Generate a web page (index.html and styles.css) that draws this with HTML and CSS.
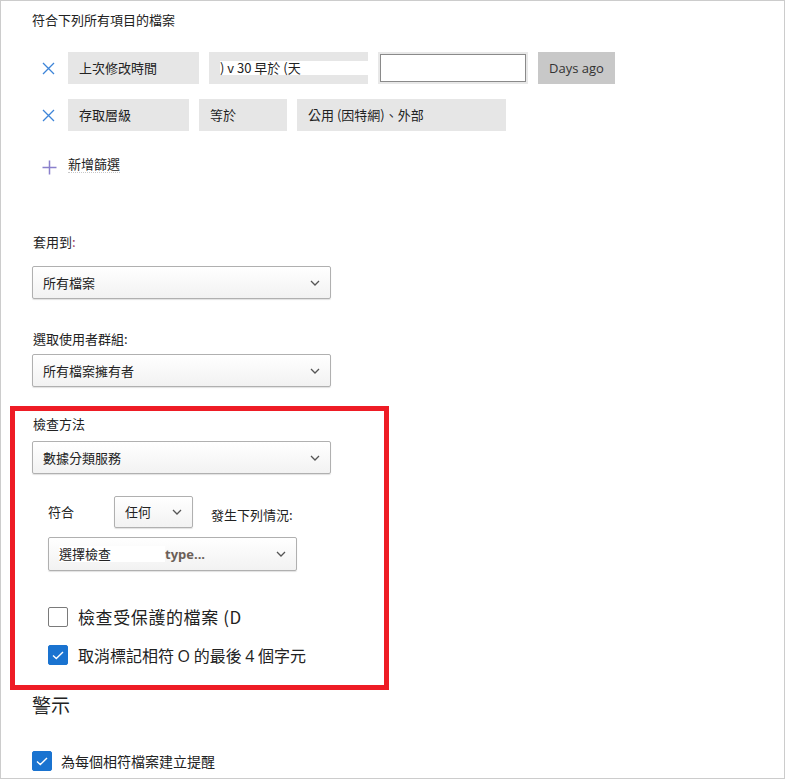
FILE: index.html
```html
<!DOCTYPE html>
<html lang="zh-Hant">
<head>
<meta charset="utf-8">
<link rel="stylesheet" href="styles.css">
</head>
<body>
<div class="frame">
  <div class="section">
    <div class="title">符合下列所有項目的檔案</div>

    <div class="filter-row row-1">
      <span class="x-icon"><svg width="13" height="13" viewBox="0 0 13 13"><path d="M1 1L12 12M12 1L1 12" stroke="#3d84d8" stroke-width="1.3" fill="none"/></svg></span>
      <div class="chip w131"><span class="chip-text">上次修改時間</span></div>
      <div class="chip w159 chip-strip"><span class="strip">) v 30 早於 (天</span></div>
      <div class="chip-input"><div class="input"></div></div>
      <div class="btn-days">Days ago</div>
    </div>

    <div class="filter-row row-2">
      <span class="x-icon"><svg width="13" height="13" viewBox="0 0 13 13"><path d="M1 1L12 12M12 1L1 12" stroke="#3d84d8" stroke-width="1.3" fill="none"/></svg></span>
      <div class="chip w121"><span class="chip-text">存取層級</span></div>
      <div class="chip w88"><span class="chip-text">等於</span></div>
      <div class="chip w209"><span class="chip-text">公用 (因特網)、外部</span></div>
    </div>

    <div class="add-row">
      <span class="plus-icon"><svg width="15" height="15" viewBox="0 0 15 15"><path d="M7.5 0.5V14.5M0.5 7.5H14.5" stroke="#8a80cc" stroke-width="1.5" fill="none"/></svg></span>
      <span class="add-text">新增篩選</span>
    </div>

    <div class="label label-apply">套用到<span class="colon">:</span></div>
    <div class="dropdown dd-wide mt16">
      <span class="dd-text">所有檔案</span>
      <svg class="chev" width="10" height="6" viewBox="0 0 10 6"><path d="M1 1L5 5L9 1" stroke="#555" stroke-width="1.3" fill="none"/></svg>
    </div>

    <div class="label label-group">選取使用者群組:</div>
    <div class="dropdown dd-wide mt7">
      <span class="dd-text">所有檔案擁有者</span>
      <svg class="chev" width="10" height="6" viewBox="0 0 10 6"><path d="M1 1L5 5L9 1" stroke="#555" stroke-width="1.3" fill="none"/></svg>
    </div>
  </div>

  <div class="highlight">
    <div class="label label-method">檢查方法</div>
    <div class="dropdown dd-wide mt9">
      <span class="dd-text">數據分類服務</span>
      <svg class="chev" width="10" height="6" viewBox="0 0 10 6"><path d="M1 1L5 5L9 1" stroke="#555" stroke-width="1.3" fill="none"/></svg>
    </div>

    <div class="match-row">
      <span class="match-label">符合</span>
      <div class="dropdown dd-small">
        <span class="dd-text">任何</span>
        <svg class="chev" width="10" height="6" viewBox="0 0 10 6"><path d="M1 1L5 5L9 1" stroke="#555" stroke-width="1.3" fill="none"/></svg>
      </div>
      <span class="occur-label">發生下列情況:</span>
    </div>

    <div class="dropdown dd-check">
      <span class="dd-text white-bg">選擇檢查</span>
      <span class="type-text">type...</span>
      <svg class="chev" width="10" height="6" viewBox="0 0 10 6"><path d="M1 1L5 5L9 1" stroke="#555" stroke-width="1.3" fill="none"/></svg>
    </div>

    <div class="check-row cr-1">
      <span class="box"></span>
      <span class="check-label wide">檢查受保護的檔案 (D</span>
    </div>
    <div class="check-row cr-2">
      <span class="box checked"><svg width="12" height="9" viewBox="0 0 12 9"><path d="M1 4.5L4.3 7.6L11 1" stroke="#fff" stroke-width="1.4" fill="none"/></svg></span>
      <span class="check-label narrow">取消標記相符 <span class="latin">O</span> 的最後 <span class="latin">4</span> 個字元</span>
    </div>
  </div>

  <div class="section">
    <div class="alert-title">警示</div>
    <div class="check-row small cr-3">
      <span class="box checked"><svg width="12" height="9" viewBox="0 0 12 9"><path d="M1 4.5L4.3 7.6L11 1" stroke="#fff" stroke-width="1.4" fill="none"/></svg></span>
      <span class="small-label">為每個相符檔案建立提醒</span>
    </div>
  </div>
</div>
</body>
</html>
```

FILE: styles.css
```css
html, body {
  margin: 0;
  padding: 0;
  background: #ffffff;
}

body {
  font-family: "Noto Sans CJK TC", "Noto Sans", sans-serif;
  color: #222222;
  font-size: 13px;
}

.frame {
  width: 785px;
  height: 779px;
  box-sizing: border-box;
  border: 1px solid #cccccc;
  padding-top: 11px;
  overflow: hidden;
}

.section {
  padding-left: 31px;
  display: flex;
  flex-direction: column;
  align-items: flex-start;
}

.title {
  font-size: 13px;
  line-height: 16px;
  height: 16px;
}

.filter-row {
  display: flex;
  align-items: center;
  gap: 10px;
  height: 32px;
  margin-left: 10px;
}

.row-1 { margin-top: 24px; }
.row-2 { margin-top: 15px; }

.x-icon {
  width: 16px;
  height: 13px;
  display: flex;
  align-items: center;
}

.chip {
  height: 32px;
  background: #e6e6e6;
  display: flex;
  align-items: center;
  box-sizing: border-box;
  padding-left: 11px;
}

.chip-text {
  font-size: 13px;
  line-height: 16px;
}

.w131 { width: 131px; }
.w159 { width: 159px; }
.w121 { width: 121px; }
.w88 { width: 88px; }
.w209 { width: 209px; }

.chip-strip {
  padding-left: 11px;
}

.strip {
  flex: 1;
  background: #ffffff;
  height: 14px;
  line-height: 14px;
  font-size: 13px;
  display: flex;
  align-items: center;
}

.chip-input {
  width: 150px;
  height: 32px;
  background: #e8e8e8;
  box-sizing: border-box;
  padding: 2px;
}

.input {
  width: 100%;
  height: 100%;
  box-sizing: border-box;
  border: 1.5px solid #8a8a8a;
  background: #ffffff;
}

.btn-days {
  width: 77px;
  height: 32px;
  background: #c8c8c8;
  color: #333333;
  font-family: "Open Sans", "Noto Sans", sans-serif;
  font-size: 13px;
  display: flex;
  align-items: center;
  justify-content: center;
}

.add-row {
  display: flex;
  align-items: center;
  height: 16px;
  margin-top: 25px;
  margin-left: 10px;
}

.plus-icon {
  width: 26px;
  height: 15px;
  display: flex;
  align-items: center;
  position: relative;
  top: 3px;
}

.add-text {
  font-size: 13px;
  line-height: 16px;
  border-bottom: 1px dotted #c8c8c8;
}

.label {
  font-size: 13px;
  line-height: 16px;
  height: 16px;
  padding-left: 1px;
}

.label-apply { margin-top: 62px; }
.label-group { margin-top: 32px; }

.colon {
  color: #a04060;
}

.mt16 { margin-top: 16px; }
.mt7 { margin-top: 7px; }
.mt9 { margin-top: 9px; }

.dropdown {
  height: 33px;
  box-sizing: border-box;
  border: 1px solid #b0b0b0;
  border-radius: 2px;
  background: linear-gradient(#ffffff, #f2f2f2);
  box-shadow: 0 1px 1px rgba(0, 0, 0, 0.12);
  display: flex;
  align-items: center;
  padding-left: 10px;
  padding-right: 10px;
}

.dd-wide { width: 299px; }

.dd-text {
  font-size: 13px;
  line-height: 16px;
}

.chev {
  margin-left: auto;
  flex: none;
}

.highlight {
  margin-top: 19px;
  margin-left: 9px;
  width: 379px;
  height: 284px;
  box-sizing: border-box;
  border: 5px solid #ee1c25;
  padding-left: 17px;
  padding-top: 5px;
  display: flex;
  flex-direction: column;
  align-items: flex-start;
}

.label-method {
  margin-top: 0;
}

.match-row {
  display: flex;
  align-items: center;
  height: 32px;
  margin-top: 22px;
  margin-left: 16px;
}

.match-label {
  font-size: 13px;
  line-height: 16px;
  width: 66px;
}

.dd-small {
  width: 79px;
  height: 32px;
}

.occur-label {
  font-size: 13px;
  line-height: 16px;
  margin-left: 18px;
  padding-top: 5px;
}

.dd-check {
  width: 249px;
  height: 34px;
  margin-top: 9px;
  margin-left: 16px;
}

.white-bg {
  background: #ffffff;
  width: 106px;
  height: 16px;
}

.type-text {
  font-family: "Open Sans", "Noto Sans", sans-serif;
  font-weight: 700;
  font-size: 13px;
  color: #6b6058;
}

.check-row {
  display: flex;
  align-items: center;
  margin-left: 16px;
  height: 20px;
}

.cr-1 { margin-top: 36px; }
.cr-2 { margin-top: 18px; }

.box {
  width: 20px;
  height: 20px;
  box-sizing: border-box;
  border: 1px solid #7a7a7a;
  border-radius: 2px;
  background: #ffffff;
  display: flex;
  align-items: center;
  justify-content: center;
  flex: none;
}

.box.checked {
  background: #1a73d0;
  border-color: #1a73d0;
}

.check-label {
  font-size: 17px;
  line-height: 20px;
  margin-left: 10px;
  color: #222222;
}

.check-label.wide {
  letter-spacing: 0.6px;
}

.check-label.narrow {
  font-size: 16px;
}

.latin {
  font-family: "Open Sans", "Noto Sans", sans-serif;
}

.alert-title {
  font-size: 19px;
  line-height: 24px;
  height: 24px;
  margin-top: 3px;
}

.cr-3 {
  margin-left: 0;
  margin-top: 34px;
}

.small-label {
  font-size: 14px;
  line-height: 18px;
  margin-left: 9px;
}
```
